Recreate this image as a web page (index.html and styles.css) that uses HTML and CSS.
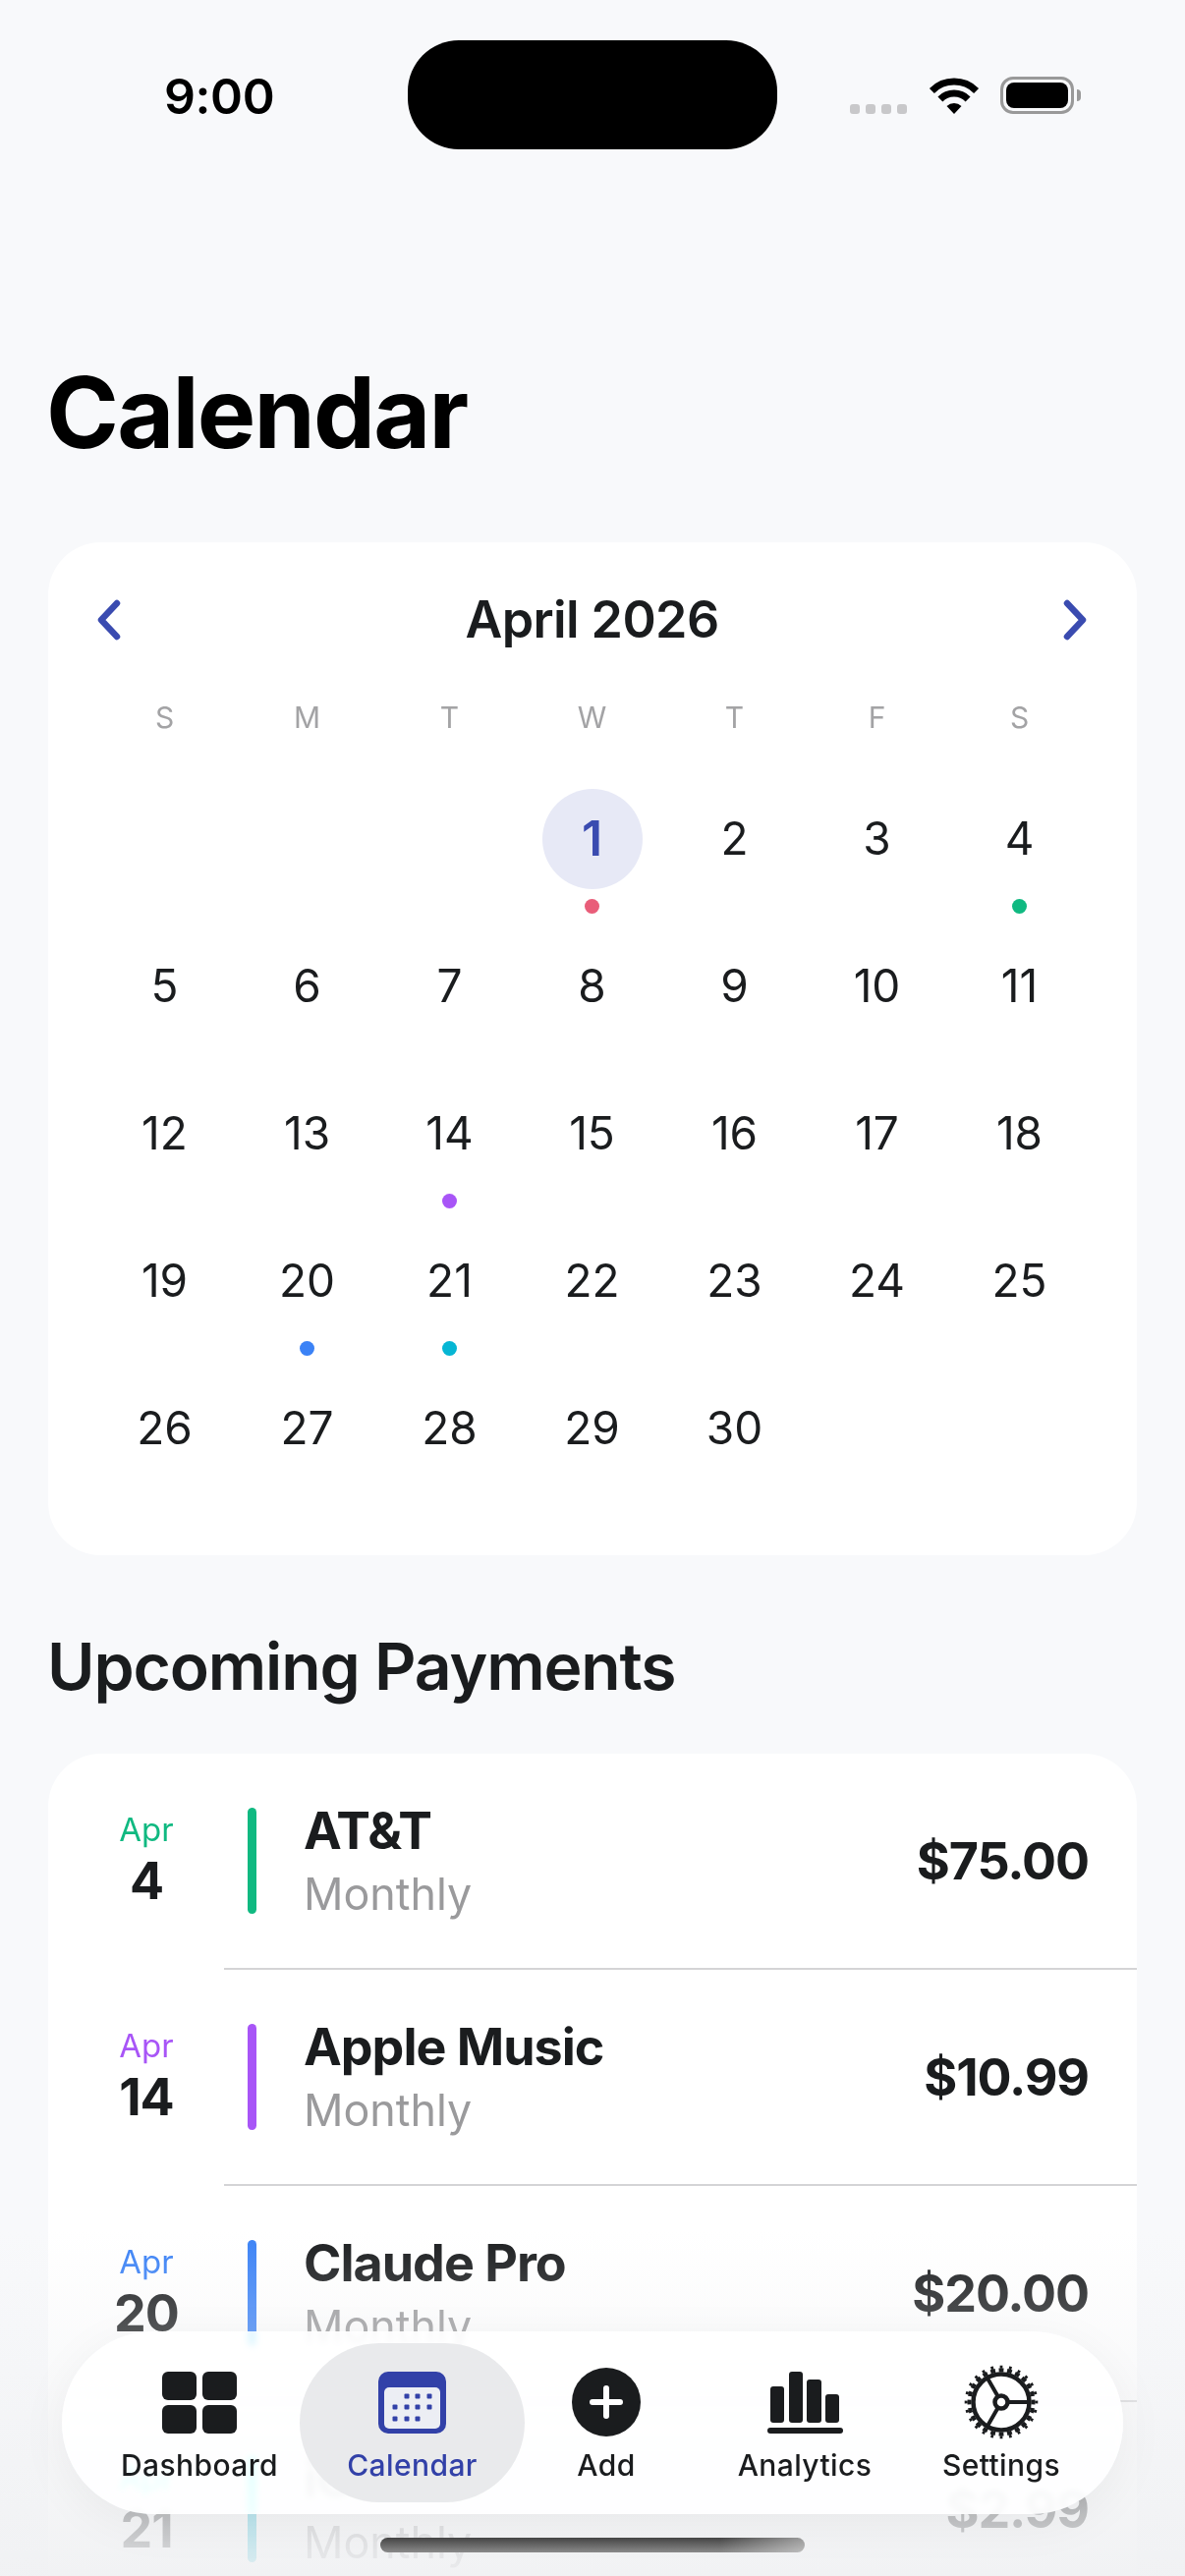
FILE: index.html
```html
<!DOCTYPE html>
<html lang="en">
<head>
  <meta charset="UTF-8" />
  <meta name="viewport" content="width=device-width, initial-scale=1.0" />
  <title>Calendar</title>
  <link rel="stylesheet" href="styles.css">
</head>
<body>
  <div class="screen">
    <div class="statusbar">
      <div class="time">9:00</div>
      <div class="island"></div>
      <div class="status-icons">
        <div class="signal"><span></span><span></span><span></span><span></span></div>
        <svg class="wifi" viewBox="0 0 52 37">
          <path d="M3.4 13.4A32 32 0 0 1 48.6 13.4" fill="none" stroke="#000" stroke-width="7"/>
          <path d="M11.9 21.9A20 20 0 0 1 40.1 21.9" fill="none" stroke="#000" stroke-width="7"/>
          <path d="M26 37L18.5 29A11 11 0 0 1 33.5 29Z" fill="#000"/>
        </svg>
        <div class="battery"><div class="battery-level"></div></div>
        <div class="battery-cap"></div>
      </div>
    </div>

    <main class="content">
      <h1 class="page-title">Calendar</h1>

      <section class="card calendar">
        <div class="cal-header">
          <svg class="chevron" viewBox="0 0 24 42"><path d="M20 4L4 21L20 38" /></svg>
          <div class="cal-month">April 2026</div>
          <svg class="chevron" viewBox="0 0 24 42"><path d="M4 4L20 21L4 38" /></svg>
        </div>
        <div class="cal-weekdays">
          <div>S</div><div>M</div><div>T</div><div>W</div><div>T</div><div>F</div><div>S</div>
        </div>
        <div class="cal-grid">
          <div class="day"></div>
          <div class="day"></div>
          <div class="day"></div>
          <div class="day today"><div class="num">1</div><div class="dot pink"></div></div>
          <div class="day"><div class="num">2</div></div>
          <div class="day"><div class="num">3</div></div>
          <div class="day"><div class="num">4</div><div class="dot green"></div></div>
          <div class="day"><div class="num">5</div></div>
          <div class="day"><div class="num">6</div></div>
          <div class="day"><div class="num">7</div></div>
          <div class="day"><div class="num">8</div></div>
          <div class="day"><div class="num">9</div></div>
          <div class="day"><div class="num">10</div></div>
          <div class="day"><div class="num">11</div></div>
          <div class="day"><div class="num">12</div></div>
          <div class="day"><div class="num">13</div></div>
          <div class="day"><div class="num">14</div><div class="dot purple"></div></div>
          <div class="day"><div class="num">15</div></div>
          <div class="day"><div class="num">16</div></div>
          <div class="day"><div class="num">17</div></div>
          <div class="day"><div class="num">18</div></div>
          <div class="day"><div class="num">19</div></div>
          <div class="day"><div class="num">20</div><div class="dot blue"></div></div>
          <div class="day"><div class="num">21</div><div class="dot cyan"></div></div>
          <div class="day"><div class="num">22</div></div>
          <div class="day"><div class="num">23</div></div>
          <div class="day"><div class="num">24</div></div>
          <div class="day"><div class="num">25</div></div>
          <div class="day"><div class="num">26</div></div>
          <div class="day"><div class="num">27</div></div>
          <div class="day"><div class="num">28</div></div>
          <div class="day"><div class="num">29</div></div>
          <div class="day"><div class="num">30</div></div>
        </div>
      </section>

      <h2 class="section-title">Upcoming Payments</h2>

      <section class="card payments">
        <div class="pay-row">
          <div class="pay-date"><div class="pay-month text-green">Apr</div><div class="pay-day">4</div></div>
          <div class="pay-body">
            <div class="pay-bar green"></div>
            <div class="pay-info"><div class="pay-name">AT&amp;T</div><div class="pay-freq">Monthly</div></div>
            <div class="pay-amount">$75.00</div>
          </div>
        </div>
        <div class="pay-row">
          <div class="pay-date"><div class="pay-month text-purple">Apr</div><div class="pay-day">14</div></div>
          <div class="pay-body">
            <div class="pay-bar purple"></div>
            <div class="pay-info"><div class="pay-name">Apple Music</div><div class="pay-freq">Monthly</div></div>
            <div class="pay-amount">$10.99</div>
          </div>
        </div>
        <div class="pay-row">
          <div class="pay-date"><div class="pay-month text-blue">Apr</div><div class="pay-day">20</div></div>
          <div class="pay-body">
            <div class="pay-bar blue"></div>
            <div class="pay-info"><div class="pay-name">Claude Pro</div><div class="pay-freq">Monthly</div></div>
            <div class="pay-amount">$20.00</div>
          </div>
        </div>
        <div class="pay-row">
          <div class="pay-date"><div class="pay-month text-cyan">Apr</div><div class="pay-day">21</div></div>
          <div class="pay-body">
            <div class="pay-bar cyan"></div>
            <div class="pay-info"><div class="pay-name">iCloud+</div><div class="pay-freq">Monthly</div></div>
            <div class="pay-amount">$2.99</div>
          </div>
        </div>
      </section>
    </main>

    <div class="fade"></div>

    <nav class="tabbar">
      <div class="tab">
        <div class="tab-icon">
          <svg class="icon-dash" viewBox="0 0 76 63" fill="#1a1c1e">
            <rect width="35" height="29" rx="6"/><rect x="41" width="35" height="29" rx="6"/>
            <rect y="34" width="35" height="29" rx="6"/><rect x="41" y="34" width="35" height="29" rx="6"/>
          </svg>
        </div>
        <div class="tab-label">Dashboard</div>
      </div>
      <div class="tab active">
        <div class="tab-icon">
          <svg class="icon-cal" viewBox="0 0 69 63">
            <rect width="69" height="63" rx="10" fill="#3241a8"/>
            <rect x="6" y="16" width="57" height="42" rx="5" fill="#eceef4"/>
            <g fill="#3241a8">
              <rect x="26.5" y="22.5" width="5" height="5" rx="1"/><rect x="37.5" y="22.5" width="5" height="5" rx="1"/><rect x="49.5" y="22.5" width="5" height="5" rx="1"/>
              <rect x="14.5" y="33.5" width="5" height="5" rx="1"/><rect x="26.5" y="33.5" width="5" height="5" rx="1"/><rect x="37.5" y="33.5" width="5" height="5" rx="1"/><rect x="49.5" y="33.5" width="5" height="5" rx="1"/>
              <rect x="14.5" y="45.5" width="5" height="5" rx="1"/><rect x="26.5" y="45.5" width="5" height="5" rx="1"/><rect x="37.5" y="45.5" width="5" height="5" rx="1"/>
            </g>
          </svg>
        </div>
        <div class="tab-label">Calendar</div>
      </div>
      <div class="tab">
        <div class="tab-icon">
          <svg class="icon-add" viewBox="0 0 70 70">
            <circle cx="35" cy="35" r="35" fill="#1a1c1e"/>
            <path d="M35 21V49M21 35H49" stroke="#fff" stroke-width="6" stroke-linecap="round"/>
          </svg>
        </div>
        <div class="tab-label">Add</div>
      </div>
      <div class="tab">
        <div class="tab-icon">
          <svg class="icon-bars" viewBox="0 0 77 63" fill="#1a1c1e">
            <rect x="3" y="15" width="14" height="37" rx="3"/>
            <rect x="22" y="0" width="14" height="52" rx="3"/>
            <rect x="40" y="8" width="15" height="44" rx="3"/>
            <rect x="59" y="23" width="14" height="29" rx="3"/>
            <rect y="57" width="77" height="6" rx="3"/>
          </svg>
        </div>
        <div class="tab-label">Analytics</div>
      </div>
      <div class="tab">
        <div class="tab-icon">
          <svg class="icon-gear" viewBox="0 0 76 76" fill="none" stroke="#1a1c1e">
            <circle cx="38" cy="38" r="32.5" stroke-width="4" pathLength="24" stroke-dasharray="0.58 0.42" stroke-dashoffset="0.29"/>
            <circle cx="38" cy="38" r="35.8" stroke-width="3" pathLength="24" stroke-dasharray="0.3 0.7" stroke-dashoffset="0.15"/>
            <circle cx="38" cy="38" r="28.5" stroke-width="4.5"/>
            <path d="M45 38H66M34.5 32L24 13.8M34.5 44L24 62.2" stroke-width="4"/>
            <circle cx="38" cy="38" r="6.5" stroke-width="4.5"/>
          </svg>
        </div>
        <div class="tab-label">Settings</div>
      </div>
    </nav>

    <div class="home-indicator"></div>
  </div>
</body>
</html>
```

FILE: styles.css
```css
html, body {
  margin: 0;
  padding: 0;
  background: #f8f9fb;
  font-family: Inter, "Liberation Sans", sans-serif;
  color: #1a1c1e;
}
.screen {
  position: relative;
  width: 1206px;
  height: 2622px;
  overflow: hidden;
  background: #f8f9fb;
}

/* Status bar */
.statusbar {
  display: grid;
  grid-template-columns: 415px 376px 1fr;
  padding-top: 41px;
  height: 111px;
}
.time {
  padding-left: 167px;
  font-size: 50px;
  line-height: 114px;
  font-weight: 600;
  letter-spacing: -0.4px;
  color: #000;
}
.island {
  height: 111px;
  border-radius: 52px;
  background: #000;
}
.status-icons {
  display: flex;
  align-items: flex-end;
  height: 75px;
  padding-left: 74px;
}
.signal {
  display: flex;
  gap: 6px;
}
.signal span {
  width: 10px;
  height: 10px;
  border-radius: 3px;
  background: #c8c8ca;
}
.wifi {
  width: 52px;
  height: 37px;
  margin-left: 22px;
}
.battery {
  box-sizing: border-box;
  width: 75px;
  height: 38px;
  margin-left: 21px;
  padding: 3px;
  border: 3px solid #999;
  border-radius: 13px;
}
.battery-level {
  height: 100%;
  border-radius: 8px;
  background: #000;
}
.battery-cap {
  width: 4px;
  height: 12px;
  margin: 0 0 13px 3px;
  border-radius: 0 4px 4px 0;
  background: #999;
}

.content {
  padding: 0 49px;
}
.page-title {
  margin: 0 0 0 -2px;
  padding-top: 208px;
  font-size: 100px;
  line-height: 120px;
  font-weight: 700;
  letter-spacing: -1.8px;
  color: #000;
}
.card {
  background: #fff;
  border-radius: 54px;
}

/* Calendar card */
.calendar {
  box-sizing: border-box;
  height: 1031px;
  margin-top: 72px;
  padding-top: 49px;
}
.cal-header {
  display: flex;
  align-items: center;
  justify-content: space-between;
  height: 60px;
  padding: 0 51px 0 50px;
}
.chevron {
  width: 24px;
  height: 42px;
  fill: none;
  stroke: #3a4bb0;
  stroke-width: 6.5;
  stroke-linecap: round;
  stroke-linejoin: round;
}
.cal-month {
  font-size: 52px;
  font-weight: 600;
  line-height: 60px;
  letter-spacing: -0.6px;
}
.cal-weekdays, .cal-grid {
  display: grid;
  grid-template-columns: repeat(7, 145px);
  padding-left: 46px;
}
.cal-weekdays {
  margin-top: 49px;
  height: 40px;
  line-height: 40px;
  text-align: center;
  font-size: 30px;
  color: #a3a3a5;
}
.cal-grid {
  margin-top: 53px;
  grid-auto-rows: 150px;
}
.day {
  display: flex;
  flex-direction: column;
  align-items: center;
}
.num {
  width: 102px;
  height: 102px;
  border-radius: 50%;
  font-size: 46px;
  line-height: 101px;
  text-align: center;
}
.today .num {
  background: #e7e9f6;
  color: #3a4bb0;
  font-weight: 600;
  font-size: 50px;
}
.dot {
  width: 15px;
  height: 15px;
  margin-top: 10px;
  border-radius: 50%;
}
.pink { background: #e95d79; }
.green { background: #10b981; }
.purple { background: #a855f7; }
.blue { background: #3b82f6; }
.cyan { background: #06b6d4; }
.text-green { color: #10b981; }
.text-purple { color: #a855f7; }
.text-blue { color: #3b82f6; }
.text-cyan { color: #06b6d4; }

/* Payments */
.section-title {
  margin: 73px 0 0 -1px;
  font-size: 66px;
  line-height: 80px;
  font-weight: 600;
  letter-spacing: -1.15px;
}
.payments {
  margin-top: 49px;
}
.pay-row {
  display: flex;
}
.pay-date {
  box-sizing: border-box;
  flex: 0 0 179px;
  padding: 57px 0 0 21px;
  text-align: center;
}
.pay-month {
  font-size: 33px;
  line-height: 40px;
}
.pay-day {
  font-size: 52px;
  line-height: 66px;
  font-weight: 700;
  letter-spacing: -1px;
}
.pay-body {
  flex: 1;
  display: flex;
  align-items: center;
  height: 218px;
  padding-left: 24px;
  padding-right: 49px;
  border-bottom: 2px solid #d4d4d6;
}
.pay-bar {
  flex: 0 0 9px;
  height: 108px;
  border-radius: 5px;
}
.pay-info {
  flex: 1;
  margin-left: 48px;
}
.pay-name {
  font-size: 52px;
  line-height: 68px;
  font-weight: 700;
  letter-spacing: -1px;
}
.pay-freq {
  font-size: 44.8px;
  line-height: 60px;
  color: #9a9a9c;
}
.pay-amount {
  font-size: 52px;
  font-weight: 700;
  letter-spacing: -1.1px;
}

/* Bottom fade, tab bar and home indicator lie over the list */
.fade {
  position: absolute;
  left: 0;
  right: 0;
  top: 2270px;
  bottom: 0;
  background: linear-gradient(180deg, rgba(240, 241, 243, 0), rgba(240, 241, 243, 0.93));
}
.tabbar {
  position: absolute;
  left: 63px;
  top: 2373px;
  box-sizing: border-box;
  width: 1080px;
  height: 186px;
  display: grid;
  grid-template-columns: 204px 229px 166px 238px 162px;
  padding: 12px 0 12px 38px;
  border-radius: 93px;
  background: rgba(255, 255, 255, 0.9);
  backdrop-filter: blur(3px) saturate(4);
  box-shadow: 0 10px 50px rgba(0, 0, 0, 0.05);
}
.tab {
  display: flex;
  flex-direction: column;
  align-items: center;
  padding-top: 23px;
  border-radius: 81px;
}
.tab.active {
  background: rgba(232, 233, 235, 0.95);
  color: #3241a8;
}
.tab-icon {
  display: flex;
  align-items: center;
  height: 74px;
}
.tab-label {
  margin-top: 9px;
  font-size: 30px;
  line-height: 36px;
  font-weight: 500;
  letter-spacing: 0.4px;
  white-space: nowrap;
}
.icon-dash { width: 76px; height: 63px; }
.icon-cal { width: 69px; height: 63px; }
.icon-add { width: 70px; height: 70px; }
.icon-bars { width: 77px; height: 63px; }
.icon-gear { width: 76px; height: 76px; }
.home-indicator {
  position: absolute;
  left: 387px;
  top: 2583px;
  width: 432px;
  height: 15px;
  border-radius: 8px;
  background:
    linear-gradient(90deg, rgba(240, 240, 240, 0) 80%, rgba(240, 240, 240, 0.5)),
    linear-gradient(180deg, #444, #8a8a8a);
}
```
